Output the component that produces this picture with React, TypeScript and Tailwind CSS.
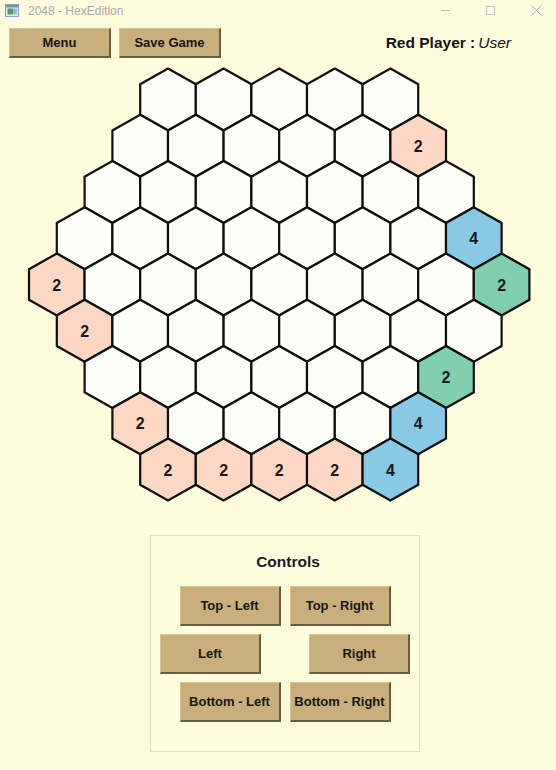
import React from "react";

const W = 55.6;
const APEX = 31;
const CORNER = 15.25;
const ROWS = 9;
const ROW_H = 46.25;

type Tile = { v: number; color: string };
const PEACH = "#fcd8c4";
const BLUE = "#88c9e6";
const GREEN = "#80cfae";

const tiles: Record<string, Tile> = {
  "1-5": { v: 2, color: PEACH },
  "3-7": { v: 4, color: BLUE },
  "4-0": { v: 2, color: PEACH },
  "4-8": { v: 2, color: GREEN },
  "5-0": { v: 2, color: PEACH },
  "6-6": { v: 2, color: GREEN },
  "7-0": { v: 2, color: PEACH },
  "7-5": { v: 4, color: BLUE },
  "8-0": { v: 2, color: PEACH },
  "8-1": { v: 2, color: PEACH },
  "8-2": { v: 2, color: PEACH },
  "8-3": { v: 2, color: PEACH },
  "8-4": { v: 4, color: BLUE },
};

function hexPoints(cx: number, cy: number) {
  const hw = W / 2;
  return [
    [cx, cy - APEX],
    [cx + hw, cy - CORNER],
    [cx + hw, cy + CORNER],
    [cx, cy + APEX],
    [cx - hw, cy + CORNER],
    [cx - hw, cy - CORNER],
  ]
    .map((p) => p.join(","))
    .join(" ");
}

function Board() {
  const cells: React.ReactNode[] = [];
  for (let r = 0; r < ROWS; r++) {
    const off = Math.abs(r - 4);
    const count = 9 - off;
    const startX = 56.8 + off * (W / 2);
    const cy = 37.5 + r * ROW_H;
    for (let c = 0; c < count; c++) {
      const cx = startX + c * W;
      const t = tiles[`${r}-${c}`];
      cells.push(
        <g key={`${r}-${c}`}>
          <polygon
            points={hexPoints(cx, cy)}
            fill={t ? t.color : "#fefef8"}
            stroke="#0e0e0e"
            strokeWidth={2.2}
            strokeLinejoin="miter"
          />
          {t && (
            <text
              x={cx}
              y={cy + 6}
              textAnchor="middle"
              fontFamily="'Liberation Sans', Arial, sans-serif"
              fontWeight="bold"
              fontSize="16"
              fill="#1a1a1a"
            >
              {t.v}
            </text>
          )}
        </g>
      );
    }
  }
  return (
    <svg width={556} height={444} viewBox="0 0 556 444" className="block">
      {cells}
    </svg>
  );
}

function Btn({ label, className = "" }: { label: string; className?: string }) {
  return (
    <button
      className={
        "flex items-center justify-center bg-[#c8af7b] border-t border-l border-[#d6c297] border-r-2 border-b-2 border-r-[#6a5c42] border-b-[#6a5c42] text-[13px] font-bold text-[#161616] " +
        className
      }
    >
      {label}
    </button>
  );
}

export default function App() {
  return (
    <div
      className="w-[556px] h-[770px] bg-[#fefcdc] overflow-hidden flex flex-col"
      style={{ fontFamily: "'Liberation Sans', Arial, sans-serif" }}
    >
      {/* title bar */}
      <div className="h-[21px] flex items-center pl-[5px] pr-[14px] text-[#a8a8a8]">
        <svg width="14" height="13" viewBox="0 0 14 13" className="shrink-0">
          <rect x="0.5" y="0.5" width="13" height="12" fill="#e8eef4" stroke="#8aa0b8" />
          <rect x="1" y="1" width="12" height="2.5" fill="#6d8fb8" />
          <rect x="2.5" y="4.5" width="6" height="6" fill="#4c9a6a" />
          <rect x="9" y="4.5" width="3" height="6" fill="#9cb7d6" />
        </svg>
        <span className="ml-[9px] text-[12px] leading-none">2048 - HexEdition</span>
        <div className="ml-auto flex items-center gap-[36px]">
          <div className="w-[9px] h-px bg-[#b4b4b4]" />
          <div className="w-[9px] h-[9px] border border-[#c0c0c0]" />
          <svg width="11" height="11" viewBox="0 0 11 11">
            <path d="M0.5 0.5 L10.5 10.5 M10.5 0.5 L0.5 10.5" stroke="#b0b0b0" strokeWidth="1" />
          </svg>
        </div>
      </div>

      {/* header */}
      <div className="mt-[7px] h-[30px] flex items-stretch pl-[9px] pr-[45px]">
        <Btn label="Menu" className="w-[102px]" />
        <Btn label="Save Game" className="w-[102px] ml-[8px]" />
        <div className="ml-auto flex items-center text-[15.5px] text-[#141414] pb-[1px]">
          <span className="font-bold">Red Player :</span>
          <span className="italic ml-[3px]">User</span>
        </div>
      </div>

      {/* board */}
      <div className="mt-[4px]">
        <Board />
      </div>

      {/* controls */}
      <div className="mt-[29px] ml-[150px] w-[270px] h-[217px] border border-[#e2e0c6] flex flex-col">
        <div className="mt-[16px] h-[20px] flex items-center justify-center pl-[6px] text-[15.5px] font-bold text-[#1a1a2a]">
          Controls
        </div>
        <div className="mt-[14px] flex justify-center gap-[9px]">
          <Btn label="Top - Left" className="w-[101px] h-[40px]" />
          <Btn label="Top - Right" className="w-[101px] h-[40px]" />
        </div>
        <div className="mt-[8px] flex justify-between px-[9px]">
          <Btn label="Left" className="w-[101px] h-[40px]" />
          <Btn label="Right" className="w-[101px] h-[40px]" />
        </div>
        <div className="mt-[8px] flex justify-center gap-[9px]">
          <Btn label="Bottom - Left" className="w-[101px] h-[40px]" />
          <Btn label="Bottom - Right" className="w-[101px] h-[40px]" />
        </div>
      </div>
    </div>
  );
}
